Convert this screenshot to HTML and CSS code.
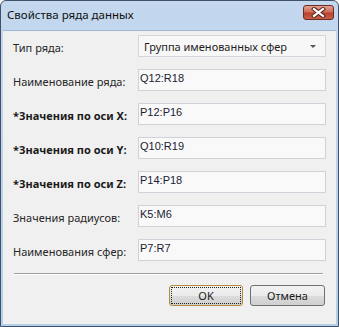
FILE: index.html
```html
<!DOCTYPE html>
<html lang="ru">
<head>
  <meta charset="UTF-8" />
  <title>Свойства ряда данных</title>
  <link rel="stylesheet" href="styles.css">
</head>
<body>
  <div class="window">
    <div class="titlebar">
      <span class="title">Свойства ряда данных</span>
      <button class="close" aria-label="Закрыть">
        <svg width="15" height="11" viewBox="0 0 15 11">
          <path d="M3 2 L12 9 M12 2 L3 9" stroke="#5a2a22" stroke-width="4.2" stroke-linecap="square" fill="none"/>
          <path d="M3 2 L12 9 M12 2 L3 9" stroke="#ffffff" stroke-width="2.2" stroke-linecap="square" fill="none"/>
        </svg>
      </button>
    </div>

    <div class="client">
      <div class="form">
        <label>Тип ряда:</label>
        <div class="combo">
          <span>Группа именованных сфер</span>
          <span class="arrow"></span>
        </div>

        <label>Наименование ряда:</label>
        <div class="field">Q12:R18</div>

        <label class="required">*Значения по оси X:</label>
        <div class="field">P12:P16</div>

        <label class="required">*Значения по оси Y:</label>
        <div class="field">Q10:R19</div>

        <label class="required">*Значения по оси Z:</label>
        <div class="field">P14:P18</div>

        <label>Значения радиусов:</label>
        <div class="field">K5:M6</div>

        <label>Наименования сфер:</label>
        <div class="field">P7:R7</div>
      </div>

      <div class="separator"></div>

      <div class="buttons">
        <button class="btn default"><span>OK</span></button>
        <button class="btn">Отмена</button>
      </div>
    </div>
  </div>
</body>
</html>
```

FILE: styles.css
```css
* {
  box-sizing: border-box;
}

body {
  margin: 0;
  padding: 0;
  background: #ffffff;
  font-family: "Noto Sans", Arial, sans-serif;
  font-size: 11px;
  color: #1e1e1e;
}

.window {
  width: 339px;
  height: 327px;
  border: 1px solid #3f5068;
  border-radius: 6px 6px 0 0;
  background: linear-gradient(#c3d8ee, #b6cfe9);
  padding: 0 2px 2px;
  display: flex;
  flex-direction: column;
  overflow: hidden;
}

.titlebar {
  height: 29px;
  display: flex;
  justify-content: space-between;
  align-items: flex-start;
  flex-shrink: 0;
}

.title {
  padding-left: 4px;
  margin-top: 6px;
  font-size: 11.5px;
  color: #101010;
}

.close {
  margin-top: 4px;
  margin-right: 2px;
  width: 31px;
  height: 15px;
  padding: 0;
  border: 1px solid #6b2b22;
  border-radius: 3px;
  background: linear-gradient(#e3a090, #cf6d5c 45%, #b8412e 55%, #c9604c);
  display: flex;
  align-items: center;
  justify-content: center;
}

.client {
  flex: 1;
  background: #f0f0f0;
  border-top: 1px solid #9fb6d0;
  display: flex;
  flex-direction: column;
}

.form {
  display: grid;
  grid-template-columns: 125px 1fr;
  row-gap: 12px;
  padding: 4px 10px 0 10px;
  align-items: center;
}

.form label {
  font-size: 11px;
  color: #262626;
  padding-top: 2px;
}

.form label.required {
  font-weight: bold;
  color: #1a1a1a;
}

.combo {
  height: 22px;
  border: 1px solid #d3d6dc;
  background: #f7f7f7;
  display: flex;
  align-items: center;
  justify-content: space-between;
  padding: 0 9px 0 5px;
}

.combo .arrow {
  width: 0;
  height: 0;
  border-left: 3px solid transparent;
  border-right: 3px solid transparent;
  border-top: 3px solid #555;
}

.field {
  height: 22px;
  border: 1px solid #d0d2da;
  background: #f9f9f9;
  padding: 2px 0 0 1px;
  font-family: "Liberation Sans", Arial, sans-serif;
  font-size: 11px;
  color: #1b2233;
}

.separator {
  margin: 12px 13px 0 11px;
  border-top: 1px solid #a0a0a0;
  border-bottom: 1px solid #ffffff;
}

.buttons {
  display: flex;
  justify-content: flex-end;
  gap: 7px;
  padding: 10px 11px 0 0;
}

.btn {
  width: 75px;
  height: 21px;
  padding: 0;
  border: 1px solid #707070;
  border-radius: 3px;
  background: linear-gradient(#f2f2f2 0%, #ebebeb 50%, #dddddd 51%, #cfcfcf 100%);
  font-family: "Noto Sans", Arial, sans-serif;
  font-size: 11px;
  color: #1a1a1a;
}

.btn.default {
  width: 74px;
  border-color: #b58a3c;
  padding: 1px;
}

.btn.default span {
  display: flex;
  align-items: center;
  justify-content: center;
  height: 100%;
  border: 1px dotted #222;
}
```
